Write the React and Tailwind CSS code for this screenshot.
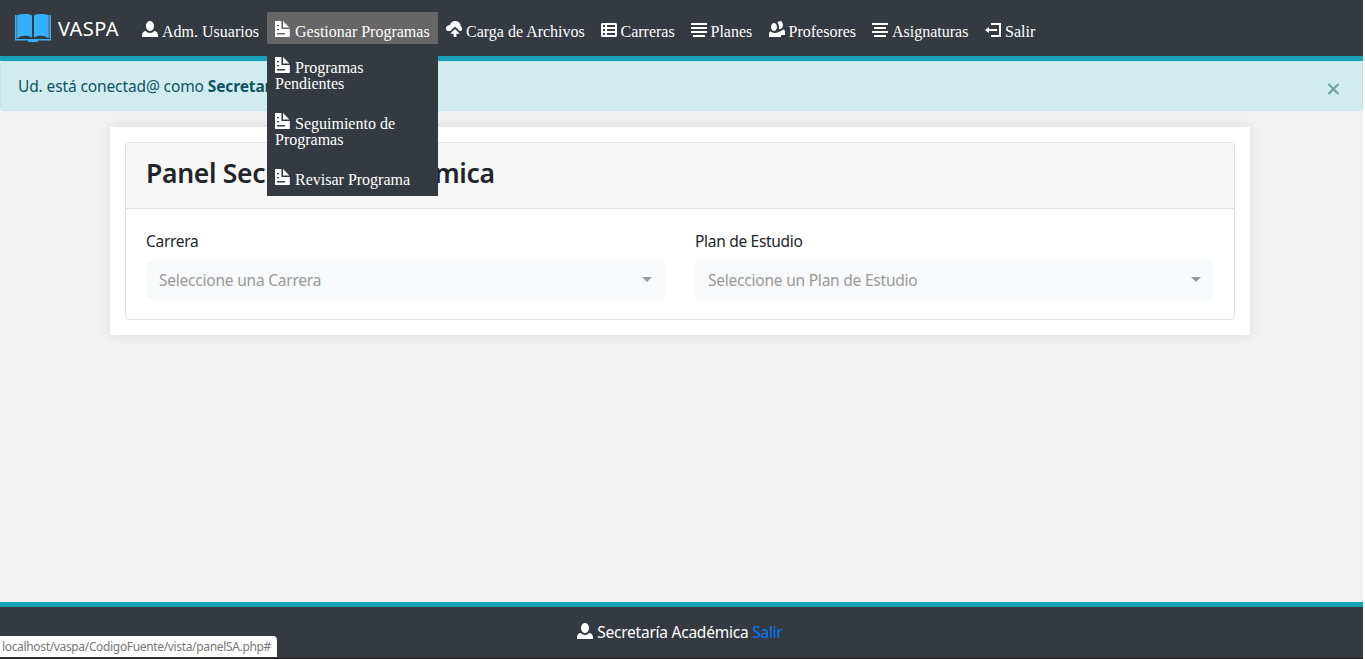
const ICONS = {
  person: 'M4 0c-1.1 0-2 1.12-2 2.5s.9 2.5 2 2.5 2-1.12 2-2.5-.9-2.5-2-2.5zm-2.09 5c-1.06.05-1.91.92-1.91 2v1h8v-1c0-1.08-.84-1.95-1.91-2-.54.61-1.28 1-2.09 1-.81 0-1.55-.39-2.09-1z',
  document: 'M0 0v8h7.4v-4h-4.2v-4h-3.2zm4 0v3.2h3.2l-3.2-3.2zm-3 2h1v.6h-1v-.6zm0 2h1v.6h-1v-.6zm0 2h4v.7h-4v-.7z',
  upload: 'M4.5 0c-1.21 0-2.27.86-2.5 2-1.1 0-2 .8-2 1.8 0 .6.3 1.2.9 1.2h1.3l2.3-2.2 2.3 2.2h.5c.5 0 .7-.5.7-1 0-.65-.2-1.2-.7-1.5v-.2c0-1.3-1.3-2.3-2.8-2.3zm0 4l-2.4 2.400h1.700v1.600h1.400v-1.600h1.700l-2.400-2.400z',
  sheet: 'M.75 1c-.41 0-.75.34-.75.75v5.5c0 .41.34.75.75.75h6.5c.41 0 .75-.34.75-.75v-5.5c0-.41-.34-.75-.75-.75h-6.5zm.25 1h1v1h-1v-1zm2 0h4v1h-4v-1zm-2 2h1v1h-1v-1zm2 0h4v1h-4v-1zm-2 2h1v1h-1v-1zm2 0h4v1h-4v-1z',
  justify: 'M0 1v1h8v-1h-8zm0 2v1h8v-1h-8zm0 2v1h8v-1h-8zm1 2v1h6v-1h-6z',
  center: 'M0 1v1h8v-1h-8zm1 2v1h6v-1h-6zm-1 2v1h8v-1h-8zm1 2v1h6v-1h-6z',
  people: 'M5.5 0c-.51 0-.95.35-1.22.88.45.54.72 1.28.72 2.13 0 .29-.03.55-.09.81.19.11.38.19.59.19.83 0 1.5-.9 1.5-2s-.67-2-1.5-2zm-3 1c-.83 0-1.5.9-1.5 2s.67 2 1.5 2 1.5-.9 1.5-2-.67-2-1.5-2zm4.75 3.16c-.43.51-1.02.82-1.69.84.27.38.44.84.44 1.34v.66h2v-1.66c0-.52-.31-.97-.75-1.19zm-6.5 1c-.44.22-.75.67-.75 1.19v1.66h6v-1.66c0-.52-.31-.97-.75-1.19-.45.53-1.36.84-2.25.84s-1.8-.32-2.25-.84z',
  logout: 'M3 1v1h4v5h-4v1h5v-7h-5zm-1 2l-2 1.5 2 1.5v-1h4v-1h-4v-1z',
};

function Icon({ name, className = '' }) {
  return (
    <svg viewBox="0 0 8 8" className={`size-4 shrink-0 fill-white ${className}`}>
      <path d={ICONS[name]} />
    </svg>
  );
}

const NAV = [
  { icon: 'person', label: 'Adm. Usuarios', width: 'w-[133px]' },
  { icon: 'document', label: 'Gestionar Programas', width: 'w-[171px]', open: true },
  { icon: 'upload', label: 'Carga de Archivos', width: 'w-[154.5px]' },
  { icon: 'sheet', label: 'Carreras', width: 'w-[90px]' },
  { icon: 'justify', label: 'Planes', width: 'w-[78px]' },
  { icon: 'people', label: 'Profesores', width: 'w-[103.5px]' },
  { icon: 'center', label: 'Asignaturas', width: 'w-[113px]' },
  { icon: 'logout', label: 'Salir', width: 'w-[66px]' },
];

const SUBMENU = [
  ['Programas', 'Pendientes'],
  ['Seguimiento de', 'Programas'],
  ['Revisar Programa'],
];

function Submenu() {
  return (
    <div className="absolute left-0 top-[44px] z-10 flex h-[140px] w-[171px] flex-col gap-6 bg-[#343a40] px-2">
      {SUBMENU.map(([first, second]) => (
        <a key={first} className="block leading-4">
          <span className="flex h-5 items-start">
            <Icon name="document" className="mt-px" />
            <span className="ml-1 pt-1">{first}</span>
          </span>
          {second && <span className="block h-3">{second}</span>}
        </a>
      ))}
    </div>
  );
}

function Navbar() {
  return (
    <header className="flex h-[61px] items-start border-b-[5px] border-[#17a2b8] bg-[#343a40] text-white">
      <div className="flex w-[134px] items-start pl-[14px] pt-[10px]">
        <svg viewBox="0 0 38 32" className="h-8 w-[38px]">
          <path d="M1 5h4v23H1zM33 5h4v23h-4z" fill="#4d83ab" />
          <path d="M1 5h1v24h34V5h1v25.500H24V31q0 1-1 1h-8q-1 0-1-1v-.5H1z" fill="#33b1ff" />
          <path d="M3.500 5C8 3.700 14 3.500 18 5.500v22c-4-2.500-10-2.500-14.500.2zM34 5c-4.500-1.300-10-1.500-14 .5v22c4-2.500 9.500-2.500 14 .2z" fill="#33b1ff" />
        </svg>
        <span className="ml-[6px] mt-[3px] text-[20px] leading-8 tracking-[0.4px]">VASPA</span>
      </div>
      <nav className="flex pt-3 font-['Liberation_Serif',serif] text-base">
        {NAV.map((item) => (
          <div key={item.label} className={`relative h-8 ${item.width} ${item.open ? 'bg-[#666]' : ''}`}>
            <a className="flex h-8 items-start whitespace-nowrap pl-2 pt-[9px] leading-4">
              <Icon name={item.icon} />
              <span className="ml-1 pt-[3px]">{item.label}</span>
            </a>
            {item.open && <Submenu />}
          </div>
        ))}
      </nav>
    </header>
  );
}

function Field({ label, placeholder }) {
  return (
    <div className="flex-1">
      <label className="block h-8 text-[15.5px] leading-6 tracking-[-0.3px] text-[#212529]">{label}</label>
      <div className="flex h-[38px] items-center justify-between rounded bg-[#f8f9fa] px-[13px] text-[15.5px] tracking-[-0.22px] text-[#999]">
        <span className="pt-[2px]">{placeholder}</span>
        <svg viewBox="0 0 10 5" className="mb-[2px] h-[5px] w-[10px] fill-[#999]">
          <path d="M0 0h10L5 5z" />
        </svg>
      </div>
    </div>
  );
}

export default function App() {
  return (
    <div className="h-[659px] w-[1365px] overflow-hidden bg-white font-['Noto_Sans',sans-serif]">
      <div className="relative flex h-[659px] w-[1363px] flex-col bg-[#f1f1f1]">
        <Navbar />
        <div className="flex h-[50px] items-start justify-between rounded border border-[#bee5eb] bg-[#d1ecf1] pl-[17px] pr-[22px] text-[#0c5460]">
          <p className="pt-[12px] text-[15.5px] leading-6 tracking-[-0.12px]">
            Ud. está conectad@ como <strong>Secretaría Académica</strong>
          </p>
          <svg viewBox="0 0 14 14" className="mt-5 size-[14px]">
            <path d="m2.500 2 10 10m0-10-10 10" fill="none" stroke="#6fa1a9" strokeWidth="2.200" />
          </svg>
        </div>
        <main className="ml-[110px] mt-4 h-[208px] w-[1140px] bg-white p-[15px] shadow-[0_0_10px_rgba(0,0,0,0.1)]">
          <section className="h-[178px] rounded border border-[#dfdfdf]">
            <div className="h-[66px] border-b border-[#dfdfdf] bg-[#f7f7f7] pl-5 pt-3">
              <h1 className="text-[26.5px] font-semibold leading-9 tracking-[-0.3px] text-[#212529]">Panel Secretaría Académica</h1>
            </div>
            <div className="flex gap-[30px] px-5 pt-5">
              <Field label="Carrera" placeholder="Seleccione una Carrera" />
              <Field label="Plan de Estudio" placeholder="Seleccione un Plan de Estudio" />
            </div>
          </section>
        </main>
        <footer className="mt-auto flex h-[57px] items-start justify-center border-b border-t-[5px] border-b-[#201c1c] border-t-[#17a2b8] bg-[#343a40] pr-[3px] pt-[13px] text-[15.5px] leading-6 tracking-[-0.24px] text-white">
          <Icon name="person" className="mr-1 mt-[3px]" />
          <span>Secretaría Académica</span>
          <a className="ml-1 text-[#007bff]">Salir</a>
        </footer>
        <div className="absolute bottom-[2px] left-0 flex h-[21px] w-[277px] items-center whitespace-nowrap rounded-tr bg-white pl-[2px] text-[12px] tracking-[-0.34px] text-[#777]">
          <span>localhost/vaspa/CodigoFuente/vista/panelSA.php#</span>
        </div>
      </div>
    </div>
  );
}
